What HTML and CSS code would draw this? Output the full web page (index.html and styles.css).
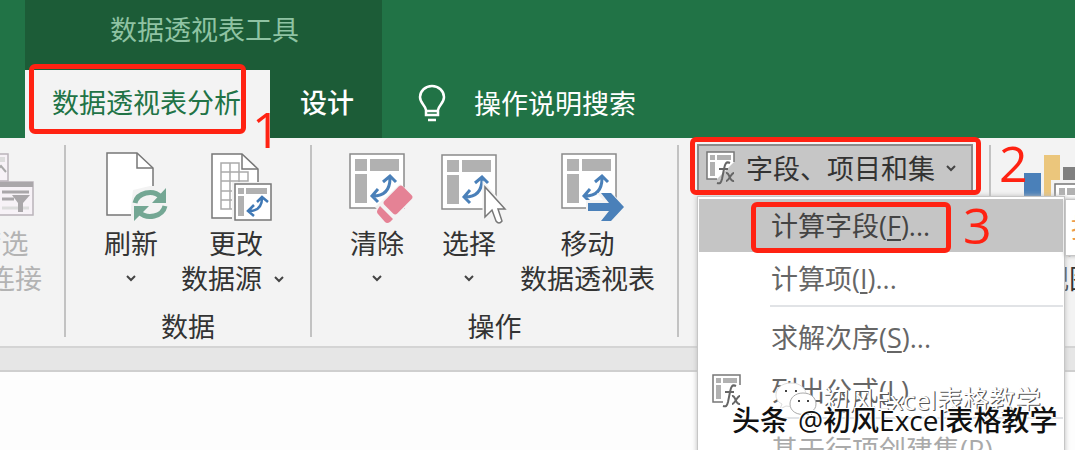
FILE: index.html
```html
<!DOCTYPE html>
<html lang="zh-CN">
<head>
<meta charset="utf-8">
<title>数据透视表分析</title>
<link rel="stylesheet" href="styles.css">
</head>
<body>
<svg class="defs" aria-hidden="true">
  <defs>
    <g id="pivot">
      <rect x="1" y="1" width="54" height="54" fill="#fff" stroke="#8a8a8a" stroke-width="1.500"/>
      <path d="M6 6h12v12H6zM21 6h29v12H21zM6 21h12v29H6z" fill="#b1b1b1"/>
      <path d="M24 43C35 43 41 37 41 25M34 29l7-6 6 6M29 36l-6 7 6 6" fill="none" stroke="#4a80b9" stroke-width="3"/>
    </g>
    <g id="fx">
      <path d="M11 28H1V1h27v10" fill="#fff" stroke="#777" stroke-width="1.500"/>
      <path d="M4 4h5v5H4zM11 4h14v5H11zM4 11h5v14H4z" fill="#b1b1b1"/>
      <path d="M24 12c-4-2-5 1-6 6l-2 10c-1 4-2 5-5 4M13 18h9M20 22c4-1 3 9 8 8M28 22c-3 0-5 8-8 8" fill="none" stroke="#666" stroke-width="2"/>
    </g>
  </defs>
</svg>
<div class="app">
  <header class="titlebar">
    <div class="context">
      <div class="context-title">数据透视表工具</div>
      <nav class="tabs">
        <button class="tab active">数据透视表分析</button>
        <button class="tab">设计</button>
      </nav>
    </div>
    <button class="tell-me">
      <svg width="28" height="40" viewBox="0 0 28 40" fill="none" stroke="#fff" stroke-width="2.500"><path d="M8 32v-5C7 22 2 20 2 14a12 11 0 0 1 24 0c0 6-5 8-6 13v5zM8 28h12M10 37h8"/></svg>
      <span>操作说明搜索</span>
    </button>
  </header>

  <main class="ribbon">
    <section class="group filters">
      <div class="tools">
        <button class="tool" disabled>
          <svg class="icon" viewBox="0 0 72 77"><path d="M20 5h22v27H20z" fill="#f7f2f7" stroke="#bbb4bb" stroke-width="1.500"/><path d="M32 8h7v5h-7z" fill="#ddd"/><path d="M32 20l3-3 5 6" fill="none" stroke="#aaa" stroke-width="2"/><path d="M20 33h47v33H20z" fill="#f7f2f7" stroke="#bbb4bb" stroke-width="1.500"/><path d="M20 33h47v5H20z" fill="#aaa7aa"/><path d="M36 43h27M36 50h12" stroke="#aaa7aa" stroke-width="3"/><path d="M36 59h27" stroke="#ddd" stroke-width="3"/><path d="M46 46h18l-7 8v9h-5v-9z" fill="#aaa7aa"/></svg>
          <span>筛选<br>器连接</span>
        </button>
      </div>
    </section>
    <section class="group data">
      <div class="tools">
        <button class="tool">
          <svg class="icon" viewBox="0 0 72 77"><path d="M12 4h30l16 15v47H12z" fill="#fff" stroke="#777" stroke-width="1.500"/><path d="M42 4v15h16" fill="none" stroke="#777" stroke-width="1.500"/><path d="M36 58l2-17 17-4h18v16l-2 17-17 3H36z" fill="#f3f3f3"/><path d="M40 54a15 13 0 0 1 26-6M70 57a15 13 0 0 1-26 6" fill="none" stroke="#74a794" stroke-width="5"/><path d="M71 39v15H57zM39 72V57h15z" fill="#74a794"/></svg>
          <span>刷新</span>
          <svg class="caret" viewBox="0 0 12 8"><path d="M2 2l4 4 4-4"/></svg>
        </button>
        <button class="tool">
          <svg class="icon" viewBox="0 0 72 77"><path d="M12 5h30l16 15v49H12z" fill="#fff" stroke="#777" stroke-width="1.500"/><path d="M42 5v15h16" fill="none" stroke="#777" stroke-width="1.500"/><path d="M21 14h18v46H21zM30 14v46M21 23h27v9H21zM39 23v9M21 42h18M21 51h18" fill="none" stroke="#aaa" stroke-width="1.500"/><rect x="32" y="33" width="42" height="41" fill="#f3f3f3"/><path d="M35 35h36v36H35z" fill="#fff" stroke="#777" stroke-width="1.500"/><path d="M38 39h6v6h-6zM46 39h21v6H46zM38 47h6v20h-6z" fill="#b1b1b1"/><path d="M49 62c8 0 13-4 13-13M57 53l5-5 6 5M54 56l-6 6 6 5" fill="none" stroke="#3f78b5" stroke-width="2.500"/></svg>
          <span>更改</span>
          <span class="split">数据源<svg class="caret" viewBox="0 0 12 8"><path d="M2 2l4 4 4-4"/></svg></span>
        </button>
      </div>
      <h2 class="caption">数据</h2>
    </section>
    <section class="group actions">
      <div class="tools">
        <button class="tool">
          <svg class="icon" viewBox="0 0 72 77"><use href="#pivot" x="8" y="4"/><path d="M34 58l25-23 16 12-26 28z" fill="#f3f3f3"/><rect x="-13" y="-9" width="26" height="18" rx="3" transform="translate(57 51) rotate(-45)" fill="#e58295"/><path d="M39 57l13 13-3 3q-3 2-5 0l-7-8q-2-2 0-5z" fill="#e58295"/></svg>
          <span>清除</span>
          <svg class="caret" viewBox="0 0 12 8"><path d="M2 2l4 4 4-4"/></svg>
        </button>
        <button class="tool select">
          <svg class="icon" viewBox="0 0 72 77"><use href="#pivot" x="8" y="5"/><path d="M52 38v31l7-7 5 12q3 1 5-2l-5-12h8z" fill="#fff" stroke="#f3f3f3" stroke-width="5"/><path d="M52 38v30l7-7 4 11q3 4 6 0l-4-12h7z" fill="#fff" stroke="#777" stroke-width="1.500"/></svg>
          <span>选择</span>
          <svg class="caret" viewBox="0 0 12 8"><path d="M2 2l4 4 4-4"/></svg>
        </button>
        <button class="tool">
          <svg class="icon" viewBox="0 0 72 77"><use href="#pivot" x="9" y="4"/><path d="M34 51h17l-6-7h15l14 14-3 16H45l6-9H34z" fill="#f3f3f3"/><path d="M36 54h21l-8-10h10l13 14-13 14H49l8-10H36z" fill="#4a80b9"/></svg>
          <span>移动<br>数据透视表</span>
        </button>
      </div>
      <h2 class="caption">操作</h2>
    </section>
    <section class="group calc">
      <div class="dropdown">
        <button class="fields" aria-expanded="true">
          <svg width="30" height="34" viewBox="0 0 30 34"><use href="#fx"/></svg>
          <span>字段、项目和集</span>
          <svg class="caret" viewBox="0 0 12 8"><path d="M2 2l4 4 4-4"/></svg>
        </button>
        <div class="menu">
          <button class="item chosen">计算字段(<u>F</u>)...</button>
          <button class="item">计算项(<u>I</u>)...</button>
          <hr>
          <button class="item">求解次序(<u>S</u>)...</button>
          <button class="item"><svg width="30" height="34" viewBox="0 0 30 34"><use href="#fx"/></svg>列出公式(<u>L</u>)</button>
          <hr>
          <button class="item" disabled>基于行项创建集(<u>R</u>)...</button>
        </div>
      </div>
    </section>
    <section class="group charts">
      <div class="tools">
        <button class="tool">
          <svg class="icon" viewBox="0 0 72 77"><path d="M4 24h17v40H4z" fill="#4a80b9"/><path d="M24 6h16v50H24z" fill="#ebc67c"/><path d="M43 18h18v36H43z" fill="#808080"/><path d="M33 33h40v40H33z" fill="#fff" stroke="#f3f3f3" stroke-width="4"/><path d="M35 35h36v36H35z" fill="#fff" stroke="#777" stroke-width="1.500"/><path d="M39 39h6v7h-6zM47 39h21v7H47z" fill="#b1b1b1"/></svg>
          <span>数据<br>透视图</span>
        </button>
      </div>
      <div class="tooltip">推</div>
    </section>
  </main>
  <div class="formula-strip"></div>
  <div class="sheet"></div>

  <div class="mark mark-tab"></div>
  <div class="mark mark-fields"></div>
  <div class="mark mark-item"></div>
  <div class="step step-one">1</div>
  <div class="step step-two">2</div>
  <div class="step step-three">3</div>

  <div class="credit credit-light">
    <svg width="42" height="36" viewBox="0 0 42 36"><path d="M16 1C7 1 1 6 1 13c0 4 2 7 6 9l-2 5 6-3c10 2 20-2 20-11C31 6 25 1 16 1z" fill="#fff" stroke="#ddd"/><path d="M28 11c-8 0-13 5-13 11 0 7 7 12 17 10l5 3-1-5c3-2 5-4 5-8 0-6-5-11-13-11z" fill="#fff" stroke="#aaa"/><path d="M10 9h2M20 9h2M23 19h2M32 19h2" stroke="#444" stroke-width="2"/></svg>
    <span>初风Excel表格教学</span>
  </div>
  <div class="credit credit-dark"><span>头条</span><span>@初风Excel表格教学</span></div>
</div>
</body>
</html>
```

FILE: styles.css
```css
* { box-sizing: border-box; }
body {
  margin: 0;
  overflow: hidden;
  font-family: "Open Sans", "Noto Sans CJK SC", sans-serif;
  font-size: 27px;
  line-height: 35px;
  color: #333;
  background: #fdfdfd;
}
button {
  margin: 0;
  padding: 0;
  border: 0;
  background: none;
  font: inherit;
  color: inherit;
  white-space: nowrap;
}
.defs { position: absolute; width: 0; height: 0; }
.app {
  position: relative;
  display: flex;
  flex-direction: column;
  min-height: 100vh;
  overflow: hidden;
}

.titlebar { display: flex; padding-left: 25px; background: #217346; }
.context { background: #1c5c37; color: #8fc3a3; }
.context-title { padding: 12px 0 23px 2px; text-align: center; }
.tabs { display: flex; }
.tab { padding: 15px 28px 18px 30px; color: #fff; font-weight: 500; }
.tab.active { padding: 15px 29px 18px 27px; background: #f3f3f3; color: #217346; font-weight: 400; }
.tell-me {
  display: flex;
  align-items: center;
  align-self: flex-end;
  gap: 28px;
  padding: 14px 36px 15px;
  color: #fff;
}

.ribbon { display: flex; height: 210px; background: #f3f3f3; border-bottom: 2px solid #d4d4d4; }
.group {
  position: relative;
  display: flex;
  flex: none;
  flex-direction: column;
  justify-content: space-between;
  padding: 11px 0 2px;
}
.group::after {
  content: "";
  position: absolute;
  top: 7px;
  right: 0;
  bottom: 9px;
  width: 2px;
  background: #c2c2c2;
}
.tools { display: flex; align-items: flex-start; gap: 14px; }
.tool { display: flex; flex-direction: column; align-items: center; }
.tool:disabled { color: #b3b3b3; }
.icon { width: 72px; height: 77px; overflow: visible; }
.caret { width: 12px; height: 8px; fill: none; stroke: #444; stroke-width: 2; }
.tool > .caret { margin-top: 13px; }
.split { display: flex; align-items: center; gap: 11px; padding-right: 6px; }
.caption { margin: 0; font-size: 27px; font-weight: 400; line-height: 34px; text-align: center; }
.filters { width: 66px; overflow: hidden; }
.filters .tools { justify-content: flex-end; padding-right: 24px; }
.data { padding-left: 29px; padding-right: 21px; }
.data .caption { margin: 0 -19px 0 -29px; }
.actions { padding-left: 29px; padding-right: 24px; }
.actions .caption { margin: 0 -22px 0 -29px; }
.select { margin: 0 1px 0 6px; }
.calc { width: 312px; padding: 6px 18px 0; }
.charts { flex: 1 0 0; padding-left: 24px; }
.charts::after { display: none; }

.dropdown { position: relative; }
.fields {
  display: flex;
  align-items: center;
  gap: 10px;
  width: 276px;
  height: 48px;
  padding-left: 7px;
  border: 2px solid #8a8a8a;
  background: #c6c6c6;
}
.menu {
  position: absolute;
  z-index: 2;
  top: 52px;
  left: 0;
  width: 368px;
  padding: 2px 1px;
  border: 1px solid #c6c6c6;
  background: #fff;
  box-shadow: 0 0 5px #bbb;
}
.menu hr { margin: 0 0 4px 71px; border: 0; border-top: 2px solid #e1e3e6; }
.item {
  display: flex;
  align-items: center;
  width: 100%;
  height: 53px;
  padding-left: 72px;
  color: #666;
}
.item u { text-decoration-thickness: 2px; text-underline-offset: 3px; }
.item svg { margin: 0 29px 0 -59px; }
.item.chosen { background: #c5c5c5; color: #444; }
.item:disabled { color: #aaa; }
.tooltip {
  position: absolute;
  z-index: 3;
  top: 61px;
  left: 74px;
  padding: 10px 5px;
  border: 1px solid #c6c6c6;
  background: #fff;
  color: #ed9b4a;
  box-shadow: 0 0 4px #aaa;
}

.formula-strip { height: 24px; background: #e6e6e6; border-bottom: 2px solid #cfcfcf; }
.sheet { flex: 1; background: #fdfdfd; }

.mark { position: absolute; z-index: 4; border: 5px solid #ff2212; border-radius: 6px; }
.mark-tab { top: 64px; left: 29px; width: 217px; height: 70px; }
.mark-fields { top: 137px; left: 690px; width: 291px; height: 58px; }
.mark-item { top: 202px; left: 751px; width: 200px; height: 51px; }
.step {
  position: absolute;
  z-index: 4;
  overflow: hidden;
  color: #ff2212;
  font-family: "Open Sans", sans-serif;
  font-size: 50px;
  line-height: 50px;
}
.step-one { top: 104px; left: 252px; width: 19px; height: 45px; }
.step-two { top: 138px; left: 999px; }
.step-three { top: 200px; left: 963px; }

.credit { position: absolute; z-index: 5; display: flex; align-items: center; white-space: nowrap; }
.credit-light {
  top: 382px;
  left: 775px;
  gap: 6px;
  color: #fff;
  font-size: 26px;
  text-shadow: 1px 1px 0 #555, 1px 0 0 #777;
}
.credit-dark {
  top: 403px;
  left: 732px;
  gap: 10px;
  color: #111;
  font-size: 28px;
  font-weight: 500;
  text-shadow: -1px -1px 0 #fff, 1px -1px 0 #fff, -1px 1px 0 #fff;
}
```
